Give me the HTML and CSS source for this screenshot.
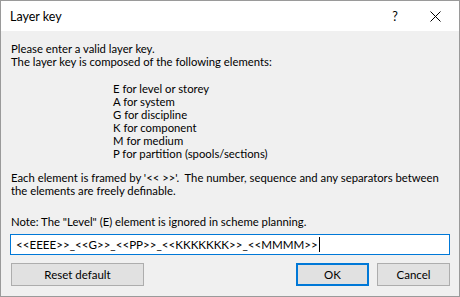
FILE: index.html
```html
<!DOCTYPE html>
<html>
<head>
<meta charset="utf-8">
<link rel="stylesheet" href="styles.css">
</head>
<body>
<div class="window">
  <div class="titlebar">
    <span class="title">Layer key</span>
    <span class="help">?</span>
    <span class="close"><svg width="11" height="11" viewBox="0 0 11 11"><path d="M0.5 0.5 L10.5 10.5 M10.5 0.5 L0.5 10.5" stroke="#000" stroke-width="1" fill="none"/></svg></span>
  </div>
  <div class="body">
    <p class="intro">Please enter a valid layer key.<br>The layer key is composed of the following elements:</p>
    <ul class="elements">
      <li>E for level or storey</li>
      <li>A for system</li>
      <li>G for discipline</li>
      <li>K for component</li>
      <li>M for medium</li>
      <li>P for partition (spools/sections)</li>
    </ul>
    <p class="framed">Each element is framed by '&lt;&lt; &gt;&gt;'.&nbsp; The number, sequence and any separators between<br>the elements are freely definable.</p>
    <p class="note">Note: The "Level" (E) element is ignored in scheme planning.</p>
    <div class="input"><span class="value">&lt;&lt;EEEE&gt;&gt;_&lt;&lt;G&gt;&gt;_&lt;&lt;PP&gt;&gt;_&lt;&lt;KKKKKKK&gt;&gt;_&lt;&lt;MMMM&gt;&gt;</span><span class="caret"></span></div>
    <div class="buttons">
      <button class="btn reset">Reset default</button>
      <span class="spacer"></span>
      <button class="btn ok">OK</button>
      <button class="btn">Cancel</button>
    </div>
  </div>
</div>
</body>
</html>
```
FILE: styles.css
```css
* { box-sizing: border-box; }
html, body { margin: 0; padding: 0; background: #f0f0f0; }
body { font-family: Lato, "Noto Sans", sans-serif; font-size: 11.3px; color: #000; }
.window {
  width: 460px; height: 297px;
  border: 1px solid #9a9a9a;
  background: #f0f0f0;
  display: flex; flex-direction: column;
}
.titlebar {
  height: 30px; background: #fff;
  display: flex; align-items: center;
  padding-left: 9px;
}
.title { font-size: 12.5px; flex: 1; }
.help { font-size: 12.5px; width: 20px; margin-right: 25px; text-align: center; }
.close { width: 11px; height: 11px; margin-right: 18px; display: flex; }
.body { padding: 11px 9px 0 9px; line-height: 13px; }
p { margin: 0; white-space: nowrap; }
.intro { margin-left: 1px; }
.elements { list-style: none; margin: 14px 0 0 103px; padding: 0; white-space: nowrap; }
.framed { margin: 11px 0 0 1px; }
.note { margin: 18px 0 0 1px; }
.input {
  margin-top: 6px; height: 21px; width: 440px;
  border: 1px solid #0078d7; background: #fff;
  display: flex; align-items: center; padding-left: 5px;
  white-space: nowrap; font-size: 11.6px;
}
.caret { width: 1px; height: 15px; background: #000; margin-left: 1px; }
.buttons { display: flex; margin-top: 8px; gap: 8px; }
.spacer { flex: 1; }
.btn {
  font-family: inherit; font-size: 11.5px; color: #000;
  height: 23px; width: 73px;
  background: #e1e1e1; border: 1px solid #adadad;
  padding: 0; margin: 0;
}
.btn.reset { width: 133px; margin-left: 1px; }
.btn.ok { border: 2px solid #0078d7; }
```
